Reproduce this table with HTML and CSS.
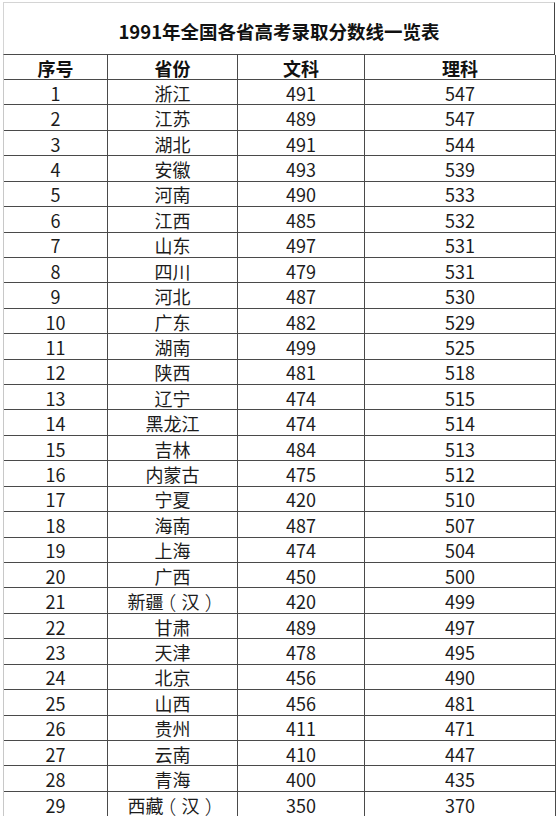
FILE: index.html
```html
<!DOCTYPE html>
<html lang="zh">
<head>
<meta charset="utf-8">
<title>1991年全国各省高考录取分数线一览表</title>
<link rel="stylesheet" href="styles.css">
</head>
<body>
<div class="sheet">
  <div class="title">1991年全国各省高考录取分数线一览表</div>
  <div class="grid">
    <div class="cell head">序号</div><div class="cell head">省份</div><div class="cell head">文科</div><div class="cell head">理科</div>
    <div class="cell">1</div><div class="cell">浙江</div><div class="cell">491</div><div class="cell">547</div>
    <div class="cell">2</div><div class="cell">江苏</div><div class="cell">489</div><div class="cell">547</div>
    <div class="cell">3</div><div class="cell">湖北</div><div class="cell">491</div><div class="cell">544</div>
    <div class="cell">4</div><div class="cell">安徽</div><div class="cell">493</div><div class="cell">539</div>
    <div class="cell">5</div><div class="cell">河南</div><div class="cell">490</div><div class="cell">533</div>
    <div class="cell">6</div><div class="cell">江西</div><div class="cell">485</div><div class="cell">532</div>
    <div class="cell">7</div><div class="cell">山东</div><div class="cell">497</div><div class="cell">531</div>
    <div class="cell">8</div><div class="cell">四川</div><div class="cell">479</div><div class="cell">531</div>
    <div class="cell">9</div><div class="cell">河北</div><div class="cell">487</div><div class="cell">530</div>
    <div class="cell">10</div><div class="cell">广东</div><div class="cell">482</div><div class="cell">529</div>
    <div class="cell">11</div><div class="cell">湖南</div><div class="cell">499</div><div class="cell">525</div>
    <div class="cell">12</div><div class="cell">陕西</div><div class="cell">481</div><div class="cell">518</div>
    <div class="cell">13</div><div class="cell">辽宁</div><div class="cell">474</div><div class="cell">515</div>
    <div class="cell">14</div><div class="cell">黑龙江</div><div class="cell">474</div><div class="cell">514</div>
    <div class="cell">15</div><div class="cell">吉林</div><div class="cell">484</div><div class="cell">513</div>
    <div class="cell">16</div><div class="cell">内蒙古</div><div class="cell">475</div><div class="cell">512</div>
    <div class="cell">17</div><div class="cell">宁夏</div><div class="cell">420</div><div class="cell">510</div>
    <div class="cell">18</div><div class="cell">海南</div><div class="cell">487</div><div class="cell">507</div>
    <div class="cell">19</div><div class="cell">上海</div><div class="cell">474</div><div class="cell">504</div>
    <div class="cell">20</div><div class="cell">广西</div><div class="cell">450</div><div class="cell">500</div>
    <div class="cell">21</div><div class="cell">新疆<span class="paren">（</span>汉<span class="paren">）</span></div><div class="cell">420</div><div class="cell">499</div>
    <div class="cell">22</div><div class="cell">甘肃</div><div class="cell">489</div><div class="cell">497</div>
    <div class="cell">23</div><div class="cell">天津</div><div class="cell">478</div><div class="cell">495</div>
    <div class="cell">24</div><div class="cell">北京</div><div class="cell">456</div><div class="cell">490</div>
    <div class="cell">25</div><div class="cell">山西</div><div class="cell">456</div><div class="cell">481</div>
    <div class="cell">26</div><div class="cell">贵州</div><div class="cell">411</div><div class="cell">471</div>
    <div class="cell">27</div><div class="cell">云南</div><div class="cell">410</div><div class="cell">447</div>
    <div class="cell">28</div><div class="cell">青海</div><div class="cell">400</div><div class="cell">435</div>
    <div class="cell">29</div><div class="cell">西藏<span class="paren">（</span>汉<span class="paren">）</span></div><div class="cell">350</div><div class="cell">370</div>
  </div>
</div>
</body>
</html>
```
FILE: styles.css
```css
html, body {
  margin: 0;
  padding: 0;
  background: #ffffff;
}
body {
  font-family: "Noto Sans CJK SC", "Noto Sans", sans-serif;
  color: #1c1c1c;
  overflow: hidden;
  height: 816px;
}
.sheet {
  padding: 2px 0 0 3px;
  width: 552px;
}
.title {
  box-sizing: border-box;
  height: 53px;
  border-top: 1px solid #d4d4d4;
  border-left: 1px solid #d4d4d4;
  border-right: 1px solid #444;
  display: flex;
  align-items: center;
  justify-content: center;
  font-size: 18.5px;
  font-weight: 700;
  color: #111;
  padding-top: 3px;
}
.grid {
  display: grid;
  grid-template-columns: 104px 130px 127px 191px;
  grid-template-rows: 25px;
  grid-auto-rows: 25.43px;
  border-top: 1px solid #4a4a4a;
  border-left: 1px solid #c8c8c8;
  margin-top: -1px;
}
.cell {
  box-sizing: border-box;
  border-right: 1px solid #4a4a4a;
  border-bottom: 1px solid #4a4a4a;
  display: flex;
  align-items: center;
  justify-content: center;
  font-size: 18px;
  line-height: 1;
  padding-top: 1px;
}
.head {
  font-weight: 700;
  color: #111;
}
.paren {
  display: inline-block;
  width: 1em;
  text-align: center;
  font-feature-settings: "hwid";
  font-weight: 300;
}
```
